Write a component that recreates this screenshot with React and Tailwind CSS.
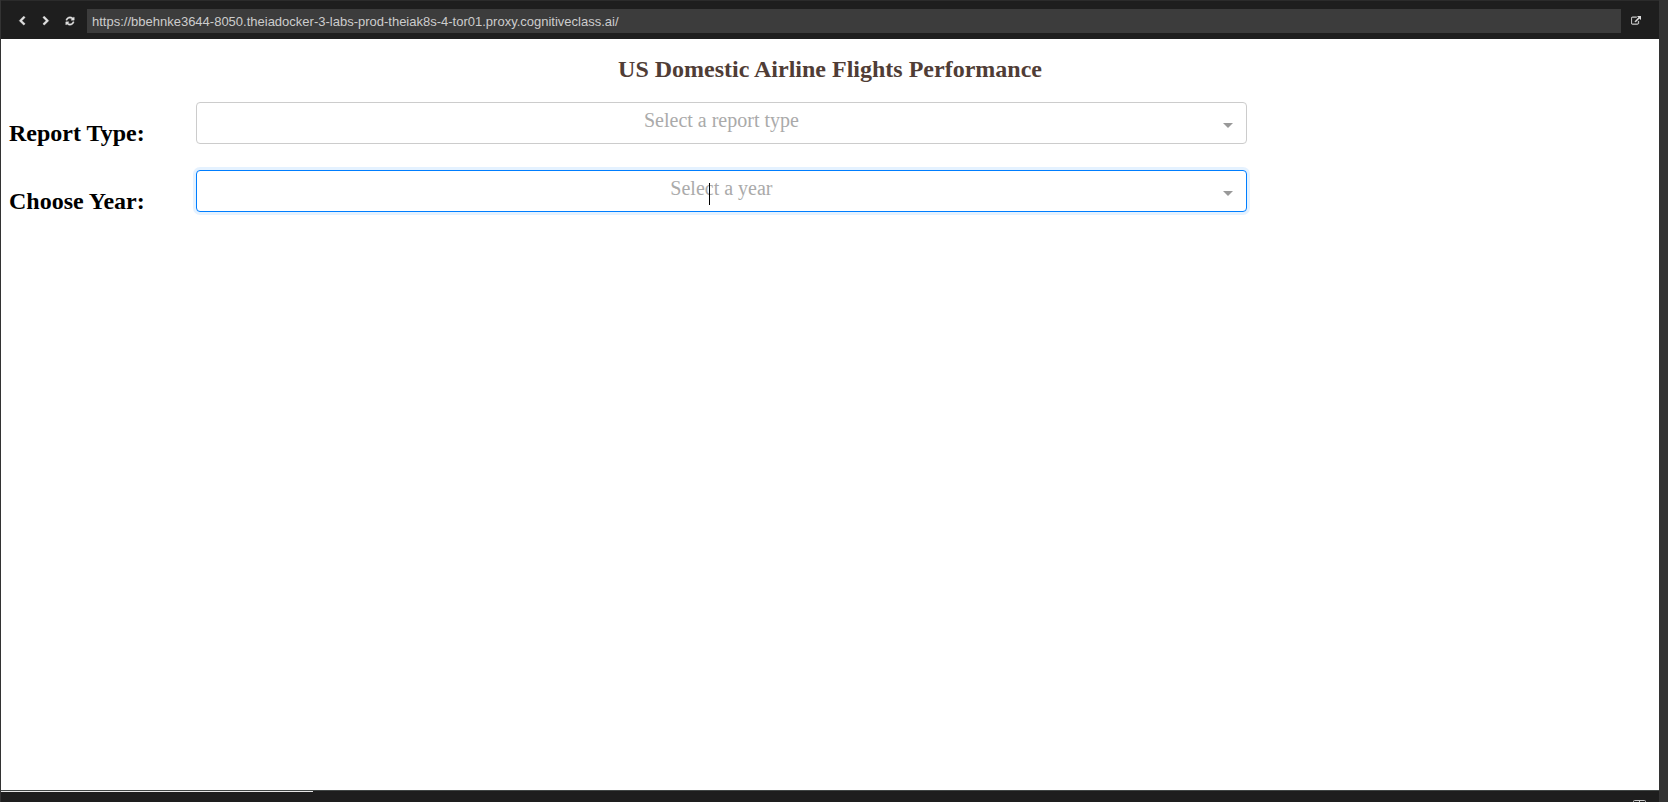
const icons = {
  back: "M1427 301l-531 531 531 531q19 19 19 45t-19 45l-166 166q-19 19-45 19t-45-19l-742-742q-19-19-19-45t19-45l742-742q19-19 45-19t45 19l166 166q19 19 19 45t-19 45z",
  forward: "M1363 877l-742 742q-19 19-45 19t-45-19l-166-166q-19-19-19-45t19-45l531-531-531-531q-19-19-19-45t19-45l166-166q19-19 45-19t45 19l742 742q19 19 19 45t-19 45z",
  refresh: "M1639 1056q0 5-1 7-64 268-268 434.5t-478 166.5q-146 0-282.5-55t-243.5-157l-129 129q-19 19-45 19t-45-19-19-45v-448q0-26 19-45t45-19h448q26 0 45 19t19 45-19 45l-137 137q71 66 161 102t187 36q134 0 250-65t186-179q11-17 53-117 8-23 30-23h192q13 0 22.5 9.5t9.5 22.5zm25-800v448q0 26-19 45t-45 19h-448q-26 0-45-19t-19-45 19-45l138-138q-148-137-349-137-134 0-250 65t-186 179q-11 17-53 117-8 23-30 23h-199q-13 0-22.5-9.5t-9.5-22.5v-7q65-268 270-434.5t480-166.5q146 0 284 55.5t245 156.5l130-129q19-19 45-19t45 19 19 45z",
  external: "M1408 928v320q0 119-84.5 203.5t-203.5 84.5h-832q-119 0-203.5-84.5t-84.5-203.5v-832q0-119 84.5-203.5t203.5-84.5h704q14 0 23 9t9 23v64q0 14-9 23t-23 9h-704q-66 0-113 47t-47 113v832q0 66 47 113t113 47h832q66 0 113-47t47-113v-320q0-14 9-23t23-9h64q14 0 23 9t9 23zm384-864v512q0 26-19 45t-45 19-45-19l-176-176-652 652q-10 10-23 10t-23-10l-114-114q-10-10-10-23t10-23l652-652-176-176q-19-19-19-45t19-45 45-19h512q26 0 45 19t19 45z",
};

function ToolButton({ label, icon }) {
  return (
    <button type="button" aria-label={label} className="flex h-6 w-6 shrink-0 items-center justify-center text-[#e0e0e0]">
      <svg viewBox="0 0 1792 1792" className="h-[10px] w-[10px]" fill="currentColor" stroke="currentColor" strokeWidth="60" aria-hidden="true">
        <path d={icon} />
      </svg>
    </button>
  );
}

function Field({ id, label, placeholder, active }) {
  return (
    <div className="flex items-start">
      <label htmlFor={id} className="w-[187px] shrink-0 pt-[17px] text-2xl leading-7 font-bold text-black">
        {label}
      </label>
      <div className="relative w-[64%]">
        <select
          id={id}
          defaultValue=""
          className={
            "block h-[42px] w-full appearance-none rounded border bg-white pb-1.5 text-center text-xl leading-8 text-[#aaa] outline-none [text-align-last:center] " +
            (active ? "border-[#007eff] shadow-[0_0_0_3px_rgba(0,126,255,0.1)]" : "border-[#ccc]")
          }
        >
          <option value="">{placeholder}</option>
        </select>
        <svg viewBox="0 0 10 5" className="pointer-events-none absolute top-[21px] right-[14px] h-[5px] w-[10px]" fill="#999" aria-hidden="true">
          <path d="M0 0H10L5 5Z" />
        </svg>
        {active && <span className="pointer-events-none absolute top-[13px] left-1/2 -ml-3 h-[22px] w-px bg-black" />}
      </div>
    </div>
  );
}

export default function App() {
  return (
    <div className="flex h-screen flex-col border-r-[9px] border-l border-[#333] bg-[#1e1e1e]">
      <header className="flex h-[39px] shrink-0 items-center border-t border-[#2b2b2b] pt-px pr-[11px] pl-[9px]">
        <nav className="flex" aria-label="Browser navigation">
          <ToolButton label="Back" icon={icons.back} />
          <ToolButton label="Forward" icon={icons.forward} />
          <ToolButton label="Reload" icon={icons.refresh} />
        </nav>
        <input
          type="text"
          aria-label="Address"
          defaultValue="https://bbehnke3644-8050.theiadocker-3-labs-prod-theiak8s-4-tor01.proxy.cognitiveclass.ai/"
          className="ml-[5px] h-6 min-w-0 flex-1 bg-[#3c3c3c] px-[5px] pt-0.5 font-['Liberation_Sans',sans-serif] text-[13px] text-[#ccc] outline-none"
        />
        <div className="ml-[3px] flex">
          <ToolButton label="Open in new window" icon={icons.external} />
        </div>
      </header>

      <main className="min-h-0 flex-1 bg-white px-2 pt-4 font-['Liberation_Serif',serif]">
        <h1 className="text-center text-2xl leading-7 font-bold text-[#503D36]">US Domestic Airline Flights Performance</h1>
        <div className="mt-[19px] flex flex-col gap-[23px]">
          <Field id="report-type" label="Report Type:" placeholder="Select a report type" />
          <Field id="year" label="Choose Year:" placeholder="Select a year" active />
        </div>
      </main>

      <footer className="h-3 shrink-0 overflow-hidden border-t border-[#414645]">
        <div className="h-px w-[312px] bg-[#e7e7e7]" />
        <div className="flex justify-end pt-2 pr-[13px]">
          <svg viewBox="0 0 13 13" className="h-[13px] w-[13px] shrink-0" fill="none" stroke="#c5c5c5" aria-hidden="true">
            <rect x="0.5" y="0.5" width="12" height="12" rx="1" />
            <path d="M6.5 1V12" />
          </svg>
        </div>
      </footer>
    </div>
  );
}
